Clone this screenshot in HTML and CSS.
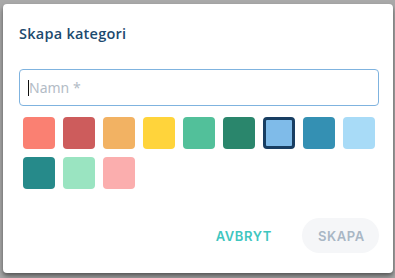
FILE: index.html
```html
<!DOCTYPE html>
<html lang="sv">
<head>
<meta charset="utf-8">
<link rel="stylesheet" href="styles.css">
</head>
<body>
<div class="backdrop">
  <div class="dialog">
    <h2 class="title">Skapa kategori</h2>
    <div class="field"><span class="caret"></span><span class="placeholder">Namn *</span></div>
    <div class="swatches">
      <span class="sw" style="background:#fa8072"></span>
      <span class="sw" style="background:#cd5c5c"></span>
      <span class="sw" style="background:#f2b263"></span>
      <span class="sw" style="background:#ffd43b"></span>
      <span class="sw" style="background:#52c09a"></span>
      <span class="sw" style="background:#2a866c"></span>
      <span class="sw selected" style="background:#7fbbe9"></span>
      <span class="sw" style="background:#3490b3"></span>
      <span class="sw" style="background:#a8dbf7"></span>
      <span class="sw" style="background:#268a8a"></span>
      <span class="sw" style="background:#9ae4c1"></span>
      <span class="sw" style="background:#fbaeae"></span>
    </div>
    <div class="actions">
      <button class="btn cancel">AVBRYT</button>
      <button class="btn create" disabled>SKAPA</button>
    </div>
  </div>
</div>
</body>
</html>
```
FILE: styles.css
```css
html, body { margin: 0; padding: 0; }
body { width: 395px; height: 278px; overflow: hidden; background: #a9a9a9; font-family: "Open Sans", "Noto Sans", sans-serif; }
.backdrop { padding: 4px 2px 0 3px; height: 278px; box-sizing: border-box; }
.dialog {
  background: #fff;
  width: 390px;
  height: 269px;
  box-sizing: border-box;
  border-radius: 4px;
  box-shadow: 0 4px 6px rgba(0,0,0,0.35), 0 2px 3px rgba(0,0,0,0.2);
  padding: 20px 14px 0 13px;
  display: flex;
  flex-direction: column;
}
.title { margin: 0 0 0 3px; font-size: 14.5px; font-weight: 600; color: #1c4a6e; line-height: 20px; letter-spacing: 0.25px; }
.field {
  margin: 25px 0 0 3px;
  width: 360px; height: 37px; box-sizing: border-box;
  border: 1px solid #7fb3df; border-radius: 4px;
  display: flex; align-items: center; padding-left: 8px;
}
.caret { width: 1px; height: 16px; background: #111; }
.placeholder { color: #b3bcc6; font-size: 14px; font-family: "Noto Sans", sans-serif; margin-left: 0; }
.swatches { display: flex; flex-wrap: wrap; gap: 8px; margin: 11px 0 0 7px; width: 360px; }
.sw { width: 32px; height: 32px; border-radius: 4px; box-sizing: border-box; }
.sw.selected { border: 3px solid #183e62; }
.actions { margin-top: auto; margin-bottom: 20px; display: flex; justify-content: flex-end; gap: 14px; align-items: center; }
.btn { border: none; font-family: "Inter", sans-serif; font-size: 13px; font-weight: 600; letter-spacing: 0.6px; height: 35px; border-radius: 18px; background: transparent; padding: 0 16px; }
.cancel { color: #3fc6bf; }
.create { background: #f5f6f8; color: #a9b7c5; padding: 0 16px; width: 77px; }
```
